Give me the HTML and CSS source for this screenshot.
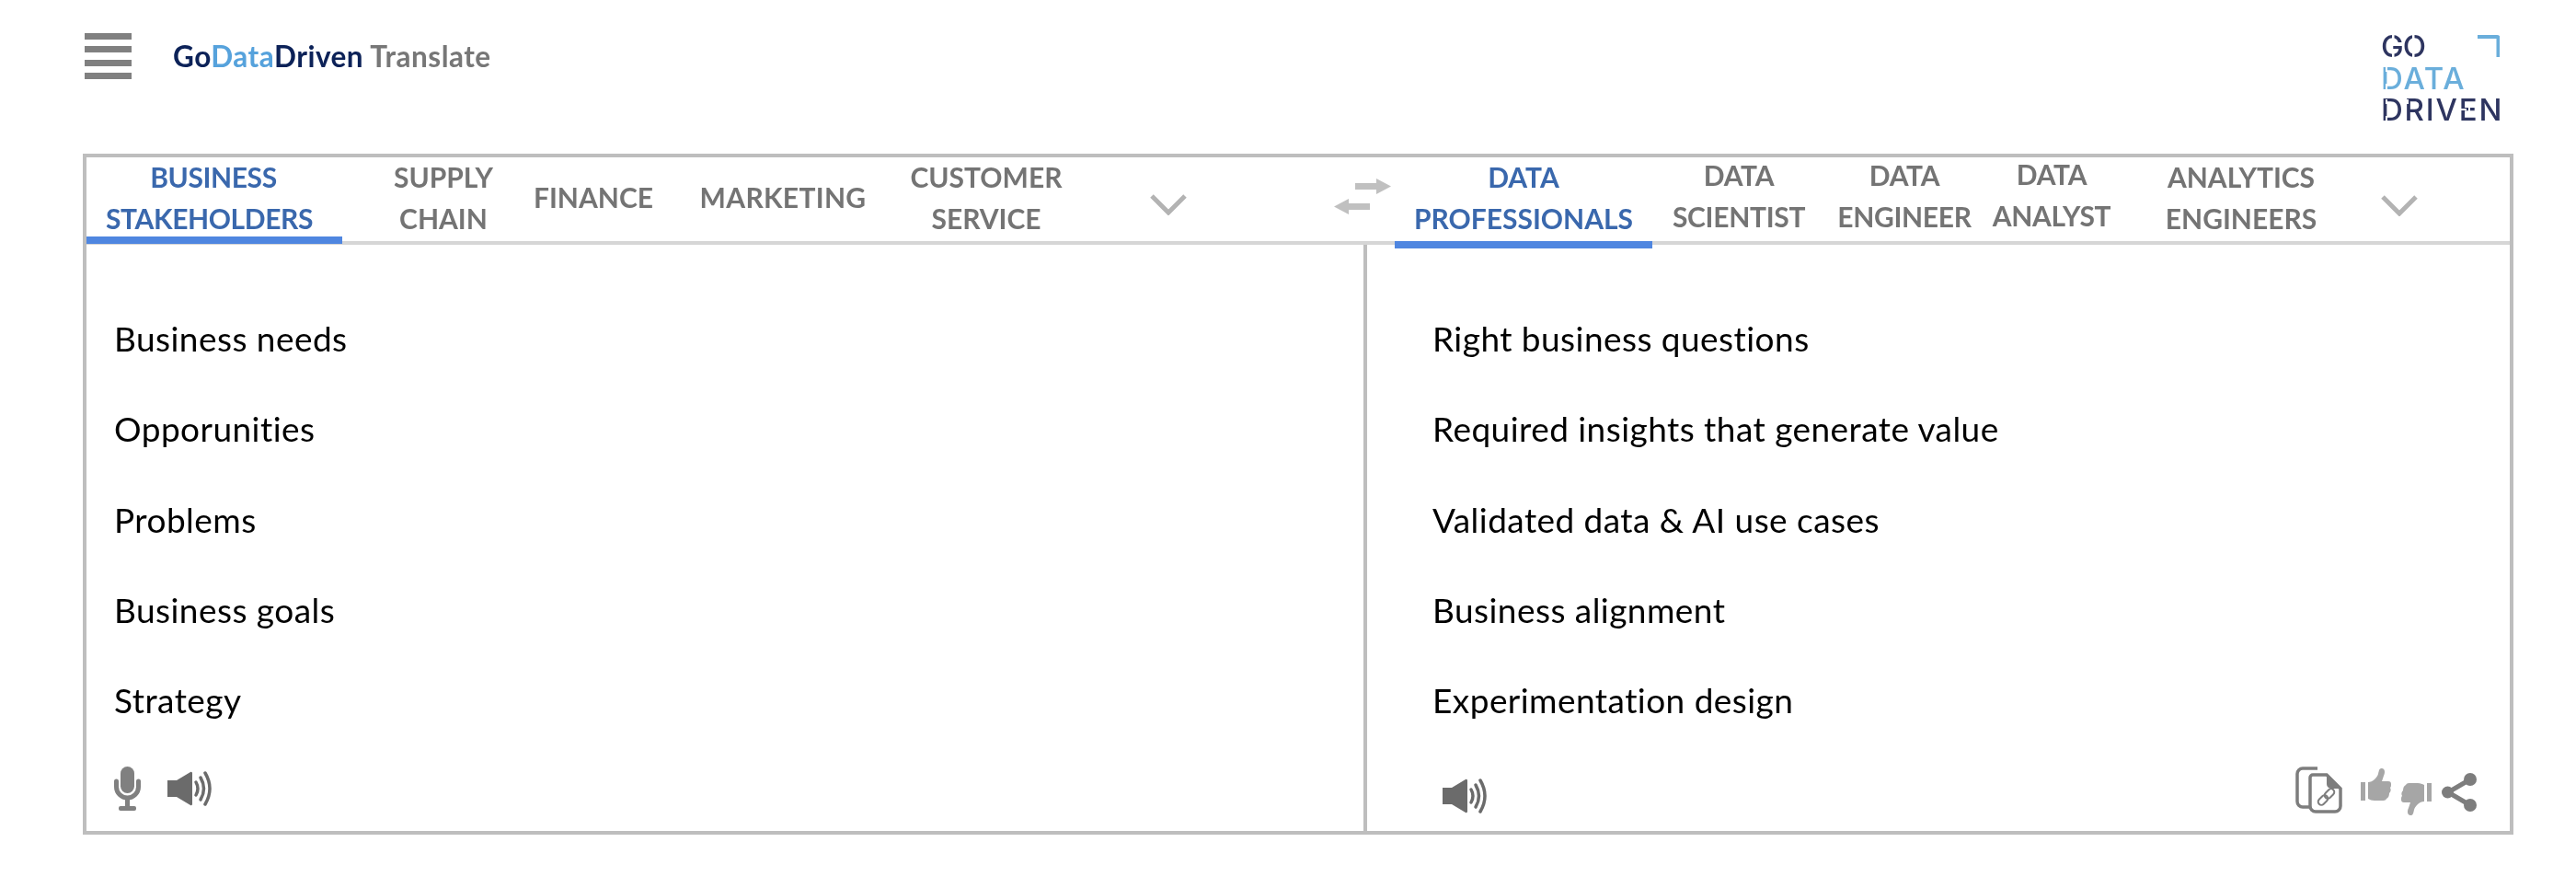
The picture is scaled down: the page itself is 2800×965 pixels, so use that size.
FILE: index.html
```html
<!DOCTYPE html>
<html lang="en">
<head>
<meta charset="utf-8">
<title>GoDataDriven Translate</title>
<link rel="stylesheet" href="styles.css">
</head>
<body>
<header class="top">
  <div class="burger"><span></span><span></span><span></span><span></span></div>
  <div class="brand"><span class="navy">Go</span><span class="sky">Data</span><span class="navy">Driven</span> <span class="grey">Translate</span></div>
  <div class="logo">
    <div class="logo-line go"><span>GO</span>
      <svg class="corner" viewBox="0 0 24 24" width="24" height="24"><path d="M0 2h21a1.500 1.500 0 0 1 1.500 1.500V24" fill="none" stroke="#6aaedb" stroke-width="4"/></svg>
    </div>
    <div class="logo-line sky-logo">DATA</div>
    <div class="logo-line">DRIVEN</div>
    <svg class="cuts" viewBox="0 0 129 100" width="129" height="100"><g fill="#fff">
      <rect x="12" y="3" width="2.500" height="6"/><rect x="12" y="24" width="2.500" height="6"/>
      <rect x="34" y="3" width="2.500" height="6"/><rect x="34" y="24" width="2.500" height="6"/>
      <rect x="5" y="40" width="2" height="5"/><rect x="5" y="58" width="2" height="6"/>
      <rect x="5" y="75" width="2" height="5"/><rect x="5" y="93" width="2" height="6"/>
      <rect x="28" y="75" width="2" height="5"/><rect x="95" y="82" width="2" height="12"/>
      <rect x="85" y="85" width="8" height="2"/>
    </g></svg>
  </div>
</header>

<main class="panel">
  <nav class="tabs">
    <div class="tab active lean"><div class="l1">BUSINESS</div><div class="l2">STAKEHOLDERS</div></div>
    <div class="tab">SUPPLY<br>CHAIN</div>
    <div class="tab single">FINANCE</div>
    <div class="tab single wide">MARKETING</div>
    <div class="tab">CUSTOMER<br>SERVICE</div>
    <div class="chev">
      <svg viewBox="0 0 40 24" width="40" height="24"><path d="M2 3l18 18L38 3" fill="none" stroke="#b3b3b3" stroke-width="5"/></svg>
    </div>
    <div class="swap">
      <svg viewBox="0 0 62 39" width="62" height="39"><path d="M23 5h23V0l16 8.500L46 17v-5H23zM39 27H16v-5L0 30.500 16 39v-5h23z" fill="#c0c0c0"/></svg>
    </div>
    <div class="tab active right">DATA<br>PROFESSIONALS</div>
    <div class="tab raised tight">DATA<br>SCIENTIST</div>
    <div class="tab raised tight">DATA<br>ENGINEER</div>
    <div class="tab raised2 tight">DATA<br>ANALYST</div>
    <div class="tab">ANALYTICS<br>ENGINEERS</div>
    <div class="chev second">
      <svg viewBox="0 0 40 24" width="40" height="24"><path d="M2 3l18 18L38 3" fill="none" stroke="#b3b3b3" stroke-width="5"/></svg>
    </div>
  </nav>

  <div class="panes">
    <section class="pane source">
      <ul class="phrases">
        <li>Business needs</li>
        <li>Opporunities</li>
        <li>Problems</li>
        <li>Business goals</li>
        <li>Strategy</li>
      </ul>
      <div class="tools">
        <svg class="mic" viewBox="0 0 29 48" width="29" height="48"><rect x="7" y="0" width="15" height="29" rx="7.500" fill="#808080"/><path d="M2.500 16v6a12 12 0 0 0 24 0v-6" fill="none" stroke="#808080" stroke-width="5" stroke-linecap="round"/><path d="M14.500 34v10" stroke="#808080" stroke-width="5"/><rect x="5" y="43" width="19" height="5" rx="2" fill="#808080"/></svg>
        <svg class="speaker" viewBox="0 0 48 38" width="48" height="38"><path d="M0 10h10L25 1a1.500 1.500 0 0 1 2 1v34a1.500 1.500 0 0 1-2 1L10 28H0z" fill="#6b6b6b"/><g fill="none" stroke="#6b6b6b" stroke-width="3.500" stroke-linecap="round"><path d="M31 12q4 7 0 14"/><path d="M36 7q7 12 0 24"/><path d="M41 2q10 17 0 34"/></g></svg>
      </div>
    </section>
    <section class="pane target">
      <ul class="phrases">
        <li>Right business questions</li>
        <li>Required insights that generate value</li>
        <li>Validated data &amp; AI use cases</li>
        <li>Business alignment</li>
        <li>Experimentation design</li>
      </ul>
      <div class="tools tools-right">
        <svg class="speaker nudge" viewBox="0 0 48 38" width="48" height="38"><path d="M0 10h10L25 1a1.500 1.500 0 0 1 2 1v34a1.500 1.500 0 0 1-2 1L10 28H0z" fill="#6b6b6b"/><g fill="none" stroke="#6b6b6b" stroke-width="3.500" stroke-linecap="round"><path d="M31 12q4 7 0 14"/><path d="M36 7q7 12 0 24"/><path d="M41 2q10 17 0 34"/></g></svg>
        <svg class="copy" viewBox="0 0 51 51" width="51" height="51"><g fill="none" stroke="#7d7d7d" stroke-width="3.500"><path d="M24 2H8a6 6 0 0 0-6 6v30a6 6 0 0 0 6 6h8"/><path d="M19 9h15l15 15v19a6 6 0 0 1-6 6H22a6 6 0 0 1-6-6V12a3 3 0 0 1 3-3z" fill="#fff"/><path d="M35 9v10a4 4 0 0 0 4 4h9" fill="#7d7d7d" stroke-width="2"/></g><g fill="none" stroke="#7d7d7d" stroke-width="2"><rect x="31" y="26" width="12" height="7" rx="3.500" transform="rotate(-45 37 29.500)"/><rect x="24" y="33" width="12" height="7" rx="3.500" transform="rotate(-45 30 36.500)"/></g></svg>
        <svg class="up" viewBox="0 0 33 37" width="33" height="37"><path d="M0 15h5v20H0z" fill="#a6a6a6"/><path d="M8 15c5 0 10-5 11-9 1-4 1-6 4-6s4 4 2 8l-2 6h7a3 3 0 0 1 3 3c0 2 0 3-1 4 1 2 1 4-1 6 0 3-1 5-3 6-1 2-3 2-5 2H15c-3 0-5-1-7-2z" fill="#a6a6a6"/></svg>
        <svg class="down" viewBox="0 0 33 37" width="33" height="37"><g transform="rotate(180 16.500 18.500)"><path d="M0 15h5v20H0z" fill="#a6a6a6"/><path d="M8 15c5 0 10-5 11-9 1-4 1-6 4-6s4 4 2 8l-2 6h7a3 3 0 0 1 3 3c0 2 0 3-1 4 1 2 1 4-1 6 0 3-1 5-3 6-1 2-3 2-5 2H15c-3 0-5-1-7-2z" fill="#a6a6a6"/></g></svg>
        <svg class="share" viewBox="0 0 38 42" width="38" height="42"><path d="M7 21L31 7M7 21l24 14" stroke="#7d7d7d" stroke-width="5"/><circle cx="6.500" cy="21" r="6.500" fill="#7d7d7d"/><circle cx="31" cy="7" r="7" fill="#7d7d7d"/><circle cx="31" cy="35" r="7" fill="#7d7d7d"/></svg>
      </div>
    </section>
  </div>
</main>
</body>
</html>
```
FILE: styles.css
```css
* { box-sizing: border-box; }
html, body { margin: 0; background: #fff; }
body {
  width: 2800px;
  height: 965px;
  overflow: hidden;
  font-family: "Lato", "Liberation Sans", sans-serif;
  font-variant-ligatures: none;
  filter: blur(0.5px);
}
.top {
  height: 167px;
  display: flex;
  align-items: flex-start;
  padding: 0 83px 0 92px;
}
.burger {
  width: 51px;
  margin-top: 36px;
  display: flex;
  flex-direction: column;
  gap: 7.400px;
}
.burger span { display: block; height: 7px; background: #808080; }
.brand {
  margin-left: 45px;
  margin-top: 39px;
  font-size: 31.500px;
  line-height: 44px;
  font-weight: 700;
  letter-spacing: 0.500px;
  white-space: nowrap;
}
.navy { color: #0c2258; }
.sky { color: #56a2dc; }
.grey { color: #777; }
.logo {
  position: relative;
  margin-left: auto;
  width: 129px;
  margin-top: 33px;
  font-family: "Inter", "Liberation Sans", sans-serif;
  font-size: 33px;
  font-weight: 500;
  line-height: 34.500px;
  letter-spacing: 1.800px;
  color: #2e3560;
}
.logo-line { display: flex; justify-content: space-between; white-space: nowrap; height: 34.500px; }
.logo-line.go { letter-spacing: -1px; }
.sky-logo { color: #6aaedb; }
.corner { margin-top: 5px; }
.cuts { position: absolute; left: 0; top: 0; }

.panel {
  margin-left: 90px;
  width: 2642px;
  height: 740px;
  border: 4px solid #bebebe;
  display: flex;
  flex-direction: column;
}
.tabs {
  height: 95px;
  flex: none;
  border-bottom: 4px solid #d6d6d6;
  display: grid;
  grid-template-columns: 278px 220px 106px 306px 136px 260px 116px 280px 188px 172px 148px 264px 80px 80px;
}
.tab {
  font-size: 30px;
  font-weight: 700;
  line-height: 44.500px;
  color: #747474;
  text-align: center;
  white-space: nowrap;
  margin-top: -1px;
  justify-self: center;
}
.tab.tight { letter-spacing: -0.300px; }
.tab.single { margin-top: 21px; }
.tab.wide { letter-spacing: 0.300px; }
.tab.raised { margin-top: -3px; }
.tab.raised2 { margin-top: -4px; }
.tab.active { color: #3a68ad; position: relative; justify-self: stretch; }
.tab.active::after {
  content: "";
  position: absolute;
  left: 0;
  right: 0;
  height: 8px;
  background: #4f86e0;
}
.lean { letter-spacing: -0.400px; padding-right: 11px; }
.lean::after { top: 87px; left: -3px; }
.right::after { top: 92px; }
.lean .l1 { padding-left: 9px; }
.chev { display: flex; justify-content: center; padding-top: 39px; }
.chev.second { padding-top: 40px; }
.swap { padding: 23px 0 0 50px; }

.panes { flex: 1; display: flex; min-height: 0; }
.pane { display: flex; flex-direction: column; }
.source { width: 1392px; border-right: 4px solid #bebebe; padding-left: 30px; }
.target { flex: 1; padding-left: 71px; }
.phrases {
  list-style: none;
  margin: 0;
  padding: 53px 0 0;
  font-size: 37px;
  letter-spacing: 0.450px;
  line-height: 98.250px;
  color: #000;
}
.tools { margin-top: auto; display: flex; align-items: center; gap: 29px; padding-bottom: 22px; }
.tools-right { align-items: flex-start; gap: 11px; padding: 0 36px 0 11px; height: 70px; }
.nudge { margin-top: 13px; }
.copy { margin-left: auto; margin-right: 9px; }
.up { margin-top: 2px; }
.down { margin-top: 16px; }
.share { margin-top: 7px; }
```
